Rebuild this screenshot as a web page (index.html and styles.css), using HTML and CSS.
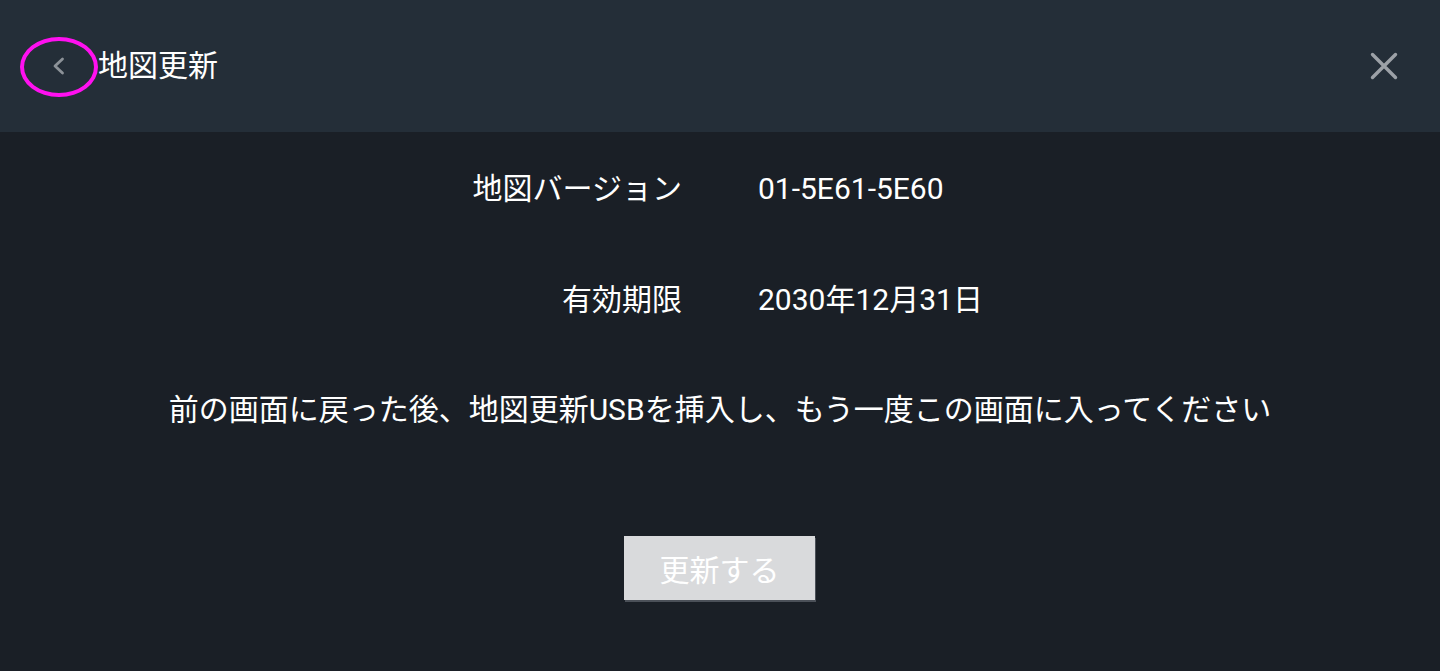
FILE: index.html
```html
<!doctype html>
<html lang="ja">
<head>
    <meta charset="utf-8">
    <title>地図更新</title>
    <link rel="stylesheet" href="styles.css">
</head>
<body>

    <!-- header -->
    <div class="Header">
        <div class="BackBtn">
            <svg width="16" height="20" viewBox="0 0 16 20"><path d="M11.5 3 L4 10 L11.5 17" fill="none" stroke="#8c9298" stroke-width="2.8" stroke-linecap="round" stroke-linejoin="round"/></svg>
            <div class="Mark"></div>
        </div>
        <div class="Title">地図更新</div>
        <div class="CloseBtn">
            <svg width="30" height="30" viewBox="0 0 30 30"><path d="M3.5 3.5 L26.5 26.5 M26.5 3.5 L3.5 26.5" fill="none" stroke="#9ca1a7" stroke-width="3.4" stroke-linecap="round"/></svg>
        </div>
    </div>

    <!-- info -->
    <div class="Main">
        <div class="Info">
            <div class="Label">地図バージョン</div>
            <div class="Value">01-5E61-5E60</div>
            <div class="Label">有効期限</div>
            <div class="Value">2030年12月31日</div>
        </div>
        <div class="Note">前の画面に戻った後、地図更新USBを挿入し、もう一度この画面に入ってください</div>
        <div class="Action"><button>更新する</button></div>
    </div>

</body>
</html>
```

FILE: styles.css
```css
*, *:before, *:after {
    box-sizing: border-box;
    margin: 0;
    padding: 0;
}

* {
    font-family: Roboto, "Noto Sans CJK JP", sans-serif;
}

html, body {
    height: 100%;
}

body {
    background: #1a1f26;
    color: #fff;
    overflow: hidden;
}

.Header {
    height: 132px;
    display: flex;
    align-items: center;
    padding: 0 24px;
    background: #242e38;
}

.BackBtn {
    position: relative;
    width: 70px;
    height: 60px;
    display: flex;
    align-items: center;
    justify-content: center;
}

.Mark {
    position: absolute;
    left: -4px;
    top: 1px;
    width: 78px;
    height: 60px;
    border: 4px solid #ff10f0;
    border-radius: 50%;
}

.Title {
    margin-left: 4px;
    font-size: 30px;
    line-height: 40px;
    flex: 1;
}

.CloseBtn {
    width: 30px;
    height: 30px;
    margin-right: 17px;
    display: flex;
}

.Main {
    padding-top: 37px;
}

.Info {
    display: grid;
    grid-template-columns: 1fr 1fr;
    column-gap: 76px;
    row-gap: 71px;
    font-size: 30px;
    line-height: 40px;
}

.Label {
    text-align: right;
}

.Note {
    margin-top: 70px;
    text-align: center;
    font-size: 30px;
    line-height: 40px;
}

.Action {
    margin-top: 106px;
    display: flex;
    justify-content: center;
}

button {
    width: 191px;
    height: 64px;
    margin-left: -1px;
    border: none;
    background: #d9dadc;
    color: #fff;
    font-size: 30px;
    box-shadow: 1px 2px 0 #4b5058;
}
```
